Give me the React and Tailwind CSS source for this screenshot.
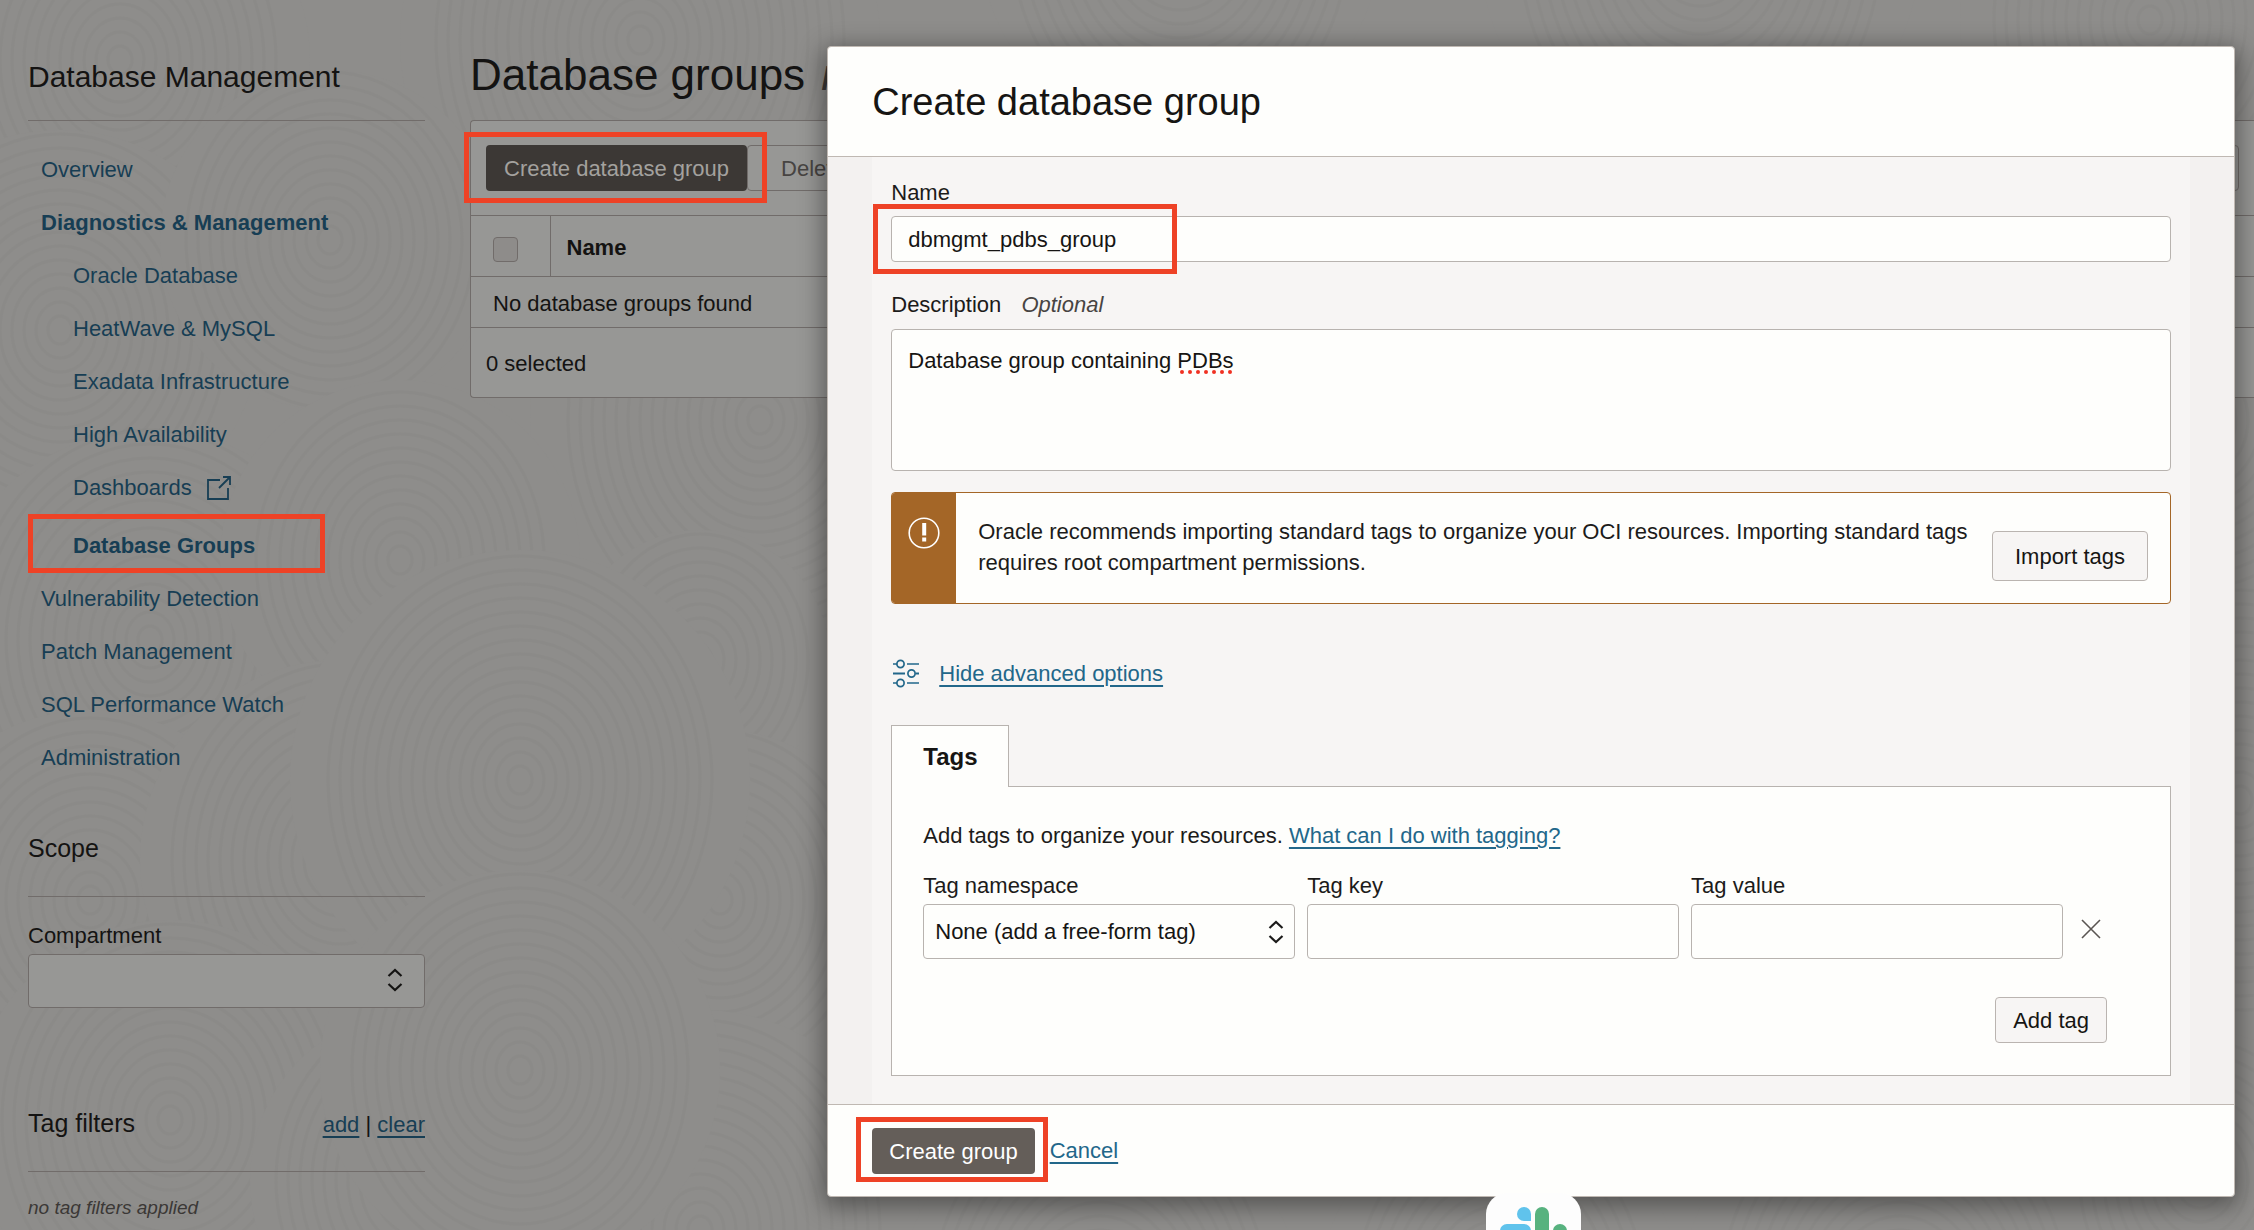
import React, { useState } from "react";

const NAV = [
  { label: "Overview" },
  { label: "Diagnostics & Management", bold: true },
  { label: "Oracle Database", sub: true },
  { label: "HeatWave & MySQL", sub: true },
  { label: "Exadata Infrastructure", sub: true },
  { label: "High Availability", sub: true },
  { label: "Dashboards", sub: true, external: true },
  { label: "Database Groups", sub: true, bold: true, marked: true },
  { label: "Vulnerability Detection" },
  { label: "Patch Management" },
  { label: "SQL Performance Watch" },
  { label: "Administration" },
];

const CLUSTERS = [
  [120, 60, 190], [640, 40, 240], [1180, -60, 200], [1700, -50, 220], [2150, 20, 190],
  [60, 330, 200], [330, 240, 170], [760, 420, 230], [2200, 420, 220],
  [150, 640, 210], [400, 560, 180], [700, 660, 130], [2240, 800, 210],
  [90, 900, 190], [340, 860, 200], [720, 900, 170], [520, 780, 230],
  [170, 1120, 200], [420, 1180, 170], [700, 1230, 220], [520, 1070, 200],
  [1100, 1300, 200], [1500, 1290, 180], [1900, 1300, 220], [2200, 1180, 150],
];

function Texture() {
  return (
    <svg className="absolute inset-0 h-full w-full" viewBox="0 0 2254 1230" preserveAspectRatio="xMinYMin slice" aria-hidden="true">
      {CLUSTERS.map(([x, y, r], i) => (
        <g key={i} fill="none" stroke="#868583" strokeWidth="3" strokeOpacity="0.28">
          <circle cx={x} cy={y} r={r} fill="#8e8d8b" stroke="none" />
          {Array.from({ length: Math.floor(r / 14) }, (_, k) => (
            <ellipse key={k} cx={x} cy={y} rx={(k + 1) * 12} ry={(k + 1) * 14} />
          ))}
        </g>
      ))}
    </svg>
  );
}

/* Outline drawn over the item it surrounds. */
function Marker({ className }) {
  return <span aria-hidden="true" className={`pointer-events-none absolute border-5 border-[#ee4226] ${className}`} />;
}

function Chevrons({ className }) {
  return (
    <svg className={`pointer-events-none absolute h-6 w-4 ${className}`} viewBox="0 0 16 24" fill="none" stroke="currentColor" strokeWidth="2.2" aria-hidden="true">
      <path d="M1.5 8 8 2l6.500 6M1.500 16l6.500 6 6.500-6" />
    </svg>
  );
}

function ExternalIcon() {
  return (
    <svg className="h-[26px] w-[26px]" viewBox="0 0 26 26" fill="none" stroke="currentColor" strokeWidth="1.8" aria-hidden="true">
      <path d="M14 5H2v19h20V13M17 2h7v8M24 2 13 13" />
    </svg>
  );
}

function SlidersIcon() {
  return (
    <svg className="h-[30px] w-7" viewBox="0 0 28 30" fill="none" stroke="#22678a" aria-hidden="true">
      <path d="M2 5h4M16 5h12M2 24h4M16 24h12" strokeWidth="1.3" />
      <path d="M2 14.500h12M24.500 14.500h3.500" strokeWidth="2" />
      <circle cx="9.500" cy="5" r="3.600" strokeWidth="1.700" />
      <circle cx="20.500" cy="14.500" r="3.600" strokeWidth="1.700" />
      <circle cx="9.500" cy="24" r="3.600" strokeWidth="1.700" />
    </svg>
  );
}

function WarningIcon() {
  return (
    <svg className="h-8 w-8" viewBox="0 0 32 32" fill="none" aria-hidden="true">
      <circle cx="16" cy="16" r="14.8" stroke="#fff" strokeWidth="1.6" />
      <path d="M14.200 6h4v12.500h-4zM14.200 20.500h4v4h-4z" fill="#fff" />
    </svg>
  );
}

function ChatBadge() {
  return (
    <svg className="absolute bottom-0 left-[1486px] h-[37px] w-[95px]" viewBox="0 0 95 37" aria-hidden="true">
      <rect x="0" y="0" width="95" height="95" rx="21" fill="#fdfdfd" />
      <path d="M38 14a7 7 0 0 1 7 7v7h-7a7 7 0 0 1 0-14z" fill="#60c3ec" />
      <rect x="14" y="31" width="31" height="14" rx="7" fill="#60c3ec" />
      <rect x="49" y="14" width="14" height="31" rx="7" fill="#57b27f" />
      <path d="M67 45v-7a7 7 0 0 1 14 0 7 7 0 0 1-7 7z" fill="#57b27f" />
    </svg>
  );
}

function Sidebar() {
  return (
    <aside className="w-[397px] shrink-0 pt-[57px]">
      <h2 className="border-b border-[#716c6a] pb-[23px] text-[30px] leading-10">Database Management</h2>
      <nav className="pt-[22px] text-[22px] leading-[53px] text-[#173e54]">
        <ul>
          {NAV.map((n) => (
            <li key={n.label} className={`relative flex items-center ${n.sub ? "pl-[45px]" : "pl-[13px]"} ${n.marked ? "pt-[5px]" : ""}`}>
              <a href="#" className={`flex items-center gap-3.5 ${n.bold ? "font-bold" : ""}`}>
                {n.label}
                {n.external && <ExternalIcon />}
              </a>
              {n.marked && <Marker className="top-0 left-0 h-[59px] w-[297px]" />}
            </li>
          ))}
        </ul>
      </nav>
      <h3 className="mt-[47px] border-b border-[#716c6a] pb-[31px] text-[25px] leading-[34px]">Scope</h3>
      <label htmlFor="compartment" className="mt-6 block text-[22px] leading-[30px]">Compartment</label>
      <div className="relative mt-[3px]">
        <select id="compartment" className="block h-[54px] w-full appearance-none rounded border border-[#716c6a] bg-[#979795] px-3 text-[22px]" />
        <Chevrons className="top-[14px] right-[22px]" />
      </div>
      <div className="mt-[98px] flex items-baseline justify-between border-b border-[#716c6a] pb-[29px]">
        <h3 className="text-[25px] leading-[34px]">Tag filters</h3>
        <p className="text-[22px] leading-[34px]">
          <a href="#" className="text-[#173e54] underline underline-offset-4">add</a>
          {" | "}
          <a href="#" className="text-[#173e54] underline underline-offset-4">clear</a>
        </p>
      </div>
      <p className="mt-[22px] text-[19px] leading-7 text-[#3b3836] italic">no tag filters applied</p>
    </aside>
  );
}

function Main() {
  return (
    <main className="min-w-0 flex-1 pt-12 text-[22px] leading-[30px] whitespace-nowrap">
      <h1 className="text-[44px] leading-[54px]">
        Database groups <em className="ml-1 text-[#3b3836]">in</em>
      </h1>
      <section className="mt-[18px] rounded-l border border-r-0 border-[#716c6a] bg-[#979795]">
        <div className="relative flex h-[94px] items-center px-[15px]">
          <button className="h-[46px] rounded bg-[#3c3835] px-[18px] pt-px text-[#a3a19e]">Create database group</button>
          <button className="h-[46px] grow rounded border border-[#716c6a] pl-[33px] pt-px text-left text-[#474442]">Delete</button>
          <Marker className="top-[11px] left-[-7px] h-[71px] w-[303px]" />
        </div>
        <table className="w-full text-left">
          <thead>
            <tr className="h-[61px] border-y border-[#716c6a]">
              <th className="w-[79px] border-r border-[#716c6a] pt-1.5 pl-[22px]">
                <input type="checkbox" aria-label="Select all" className="block h-[25px] w-[25px] appearance-none rounded border border-[#716c6a] bg-[#8e8c8a]" />
              </th>
              <th className="pt-[3px] pl-4">Name</th>
            </tr>
          </thead>
          <tbody>
            <tr className="h-[51px] border-b border-[#716c6a]">
              <td colSpan={2} className="pt-[3px] pl-[22px]">No database groups found</td>
            </tr>
          </tbody>
        </table>
        <p className="px-[15px] pt-[21px] pb-[18px]">0 selected</p>
      </section>
    </main>
  );
}

const field = "w-full rounded border border-[#b8b3af] bg-[#fefefc] text-[#161513]";

function Dialog() {
  const [name, setName] = useState("dbmgmt_pdbs_group");
  const [description, setDescription] = useState("Database group containing PDBs");
  return (
    <section role="dialog" aria-labelledby="dialog-title" className="absolute top-[46px] right-[19px] w-[calc(62.5%-1px)] rounded border border-[#bfb8b2] bg-[#fefefc] text-[22px] leading-[30px] text-[#1c1b1a] shadow-[0_6px_24px_4px_rgba(0,0,0,0.4)]">
      <header className="border-b border-[#bfb8b2] px-11 pt-[31px] pb-[30px]">
        <h2 id="dialog-title" className="text-[38px] leading-[48px] text-[#161513]">Create database group</h2>
      </header>
      <div className="bg-[#f3f1f0] px-11">
        <form id="group-form" className="bg-[#f7f5f4] px-[19px] pt-[21px] pb-7">
          <label htmlFor="name" className="block">Name</label>
          <div className="relative mt-2">
            <input id="name" value={name} onChange={(e) => setName(e.target.value)} className={`block h-[46px] px-4 pt-px ${field}`} />
            <Marker className="top-[-12px] left-[-18px] h-[70px] w-[304px]" />
          </div>
          <label htmlFor="description" className="mt-7 block">
            Description <em className="ml-3.5 text-[#474442]">Optional</em>
          </label>
          <div className="relative mt-[9px]">
            <textarea id="description" spellCheck={false} value={description} onChange={(e) => setDescription(e.target.value)} className={`block h-[142px] resize-none px-4 py-4 ${field}`} />
            <svg className="absolute top-[41px] left-[289px] h-1 w-[52px]" viewBox="0 0 52 4" fill="#f03122" aria-hidden="true">
              {[2, 10, 18, 26, 34, 42, 50].map((x) => <circle key={x} cx={x} cy="2" r="2" />)}
            </svg>
          </div>
          <div className="mt-[21px] flex min-h-[112px] overflow-hidden rounded border border-[#a46627] bg-[#fefefc]">
            <div className="flex w-16 shrink-0 justify-center bg-[#a46627] pt-6"><WarningIcon /></div>
            <div className="flex grow items-start gap-5 pt-[23px] pr-[22px] pb-5 pl-[22px]">
              <p className="grow leading-[31px]">
                Oracle recommends importing standard tags to organize your OCI resources. Importing standard tags requires root compartment permissions.
              </p>
              <button type="button" className="mt-[15px] h-[50px] shrink-0 rounded border border-[#bab4b0] bg-[#f7f5f4] px-[22px] pt-px text-[#161513]">Import tags</button>
            </div>
          </div>
          <div className="mt-[55px] flex items-center gap-5">
            <SlidersIcon />
            <a href="#" className="text-[#22678a] underline underline-offset-4">Hide advanced options</a>
          </div>
          <div role="tablist" className="relative mt-9 -mb-px flex">
            <button type="button" role="tab" aria-selected="true" className="h-[62px] border border-b-0 border-[#b8b3af] bg-[#fefefc] px-[31px] pt-px text-2xl font-bold text-[#161513]">Tags</button>
          </div>
          <div role="tabpanel" className="border border-[#b8b3af] bg-[#fefefc] px-[31px] pt-[34px] pb-8">
            <p>
              Add tags to organize your resources. <a href="#" className="text-[#22678a] underline underline-offset-4">What can I do with tagging?</a>
            </p>
            <div className="mt-5 flex items-end gap-3">
              <div className="flex-1">
                <label htmlFor="namespace" className="block">Tag namespace</label>
                <div className="relative mt-[3px]">
                  <select id="namespace" className={`block h-[55px] appearance-none pt-px pr-10 pl-[11px] ${field}`}>
                    <option>None (add a free-form tag)</option>
                  </select>
                  <Chevrons className="top-4 right-[11px]" />
                </div>
              </div>
              <div className="flex-1">
                <label htmlFor="key" className="block">Tag key</label>
                <input id="key" className={`mt-[3px] block h-[55px] px-3 ${field}`} />
              </div>
              <div className="flex-1">
                <label htmlFor="value" className="block">Tag value</label>
                <input id="value" className={`mt-[3px] block h-[55px] px-3 ${field}`} />
              </div>
              <button type="button" aria-label="Remove tag" className="mr-[38px] mb-5 ml-1.5 h-5 w-5">
                <svg viewBox="0 0 20 20" fill="none" stroke="#5a5552" strokeWidth="1.6"><path d="m1 1 18 18M19 1 1 19" /></svg>
              </button>
            </div>
            <div className="mt-[38px] flex justify-end pr-8">
              <button type="button" className="h-[46px] rounded border border-[#bab4b0] bg-[#f7f5f4] px-[17px] pt-px text-[#161513]">Add tag</button>
            </div>
          </div>
        </form>
      </div>
      <footer className="flex items-center gap-[15px] border-t border-[#bfb8b2] px-11 pt-[23px] pb-[22px]">
        <div className="relative">
          <button form="group-form" type="button" className="h-[46px] rounded bg-[#645e59] px-[17px] pt-px text-white">Create group</button>
          <Marker className="top-[-11px] left-[-16px] h-[65px] w-[192px]" />
        </div>
        <a href="#" className="text-[#22678a] underline underline-offset-4">Cancel</a>
      </footer>
    </section>
  );
}

export default function App() {
  return (
    <div className="relative h-screen overflow-hidden bg-[#8e8d8b] font-['Liberation_Sans',Arial,sans-serif] text-[#141312]">
      <Texture />
      <div className="relative flex gap-[45px] pl-7">
        <Sidebar />
        <Main />
      </div>
      <Dialog />
      <ChatBadge />
    </div>
  );
}
